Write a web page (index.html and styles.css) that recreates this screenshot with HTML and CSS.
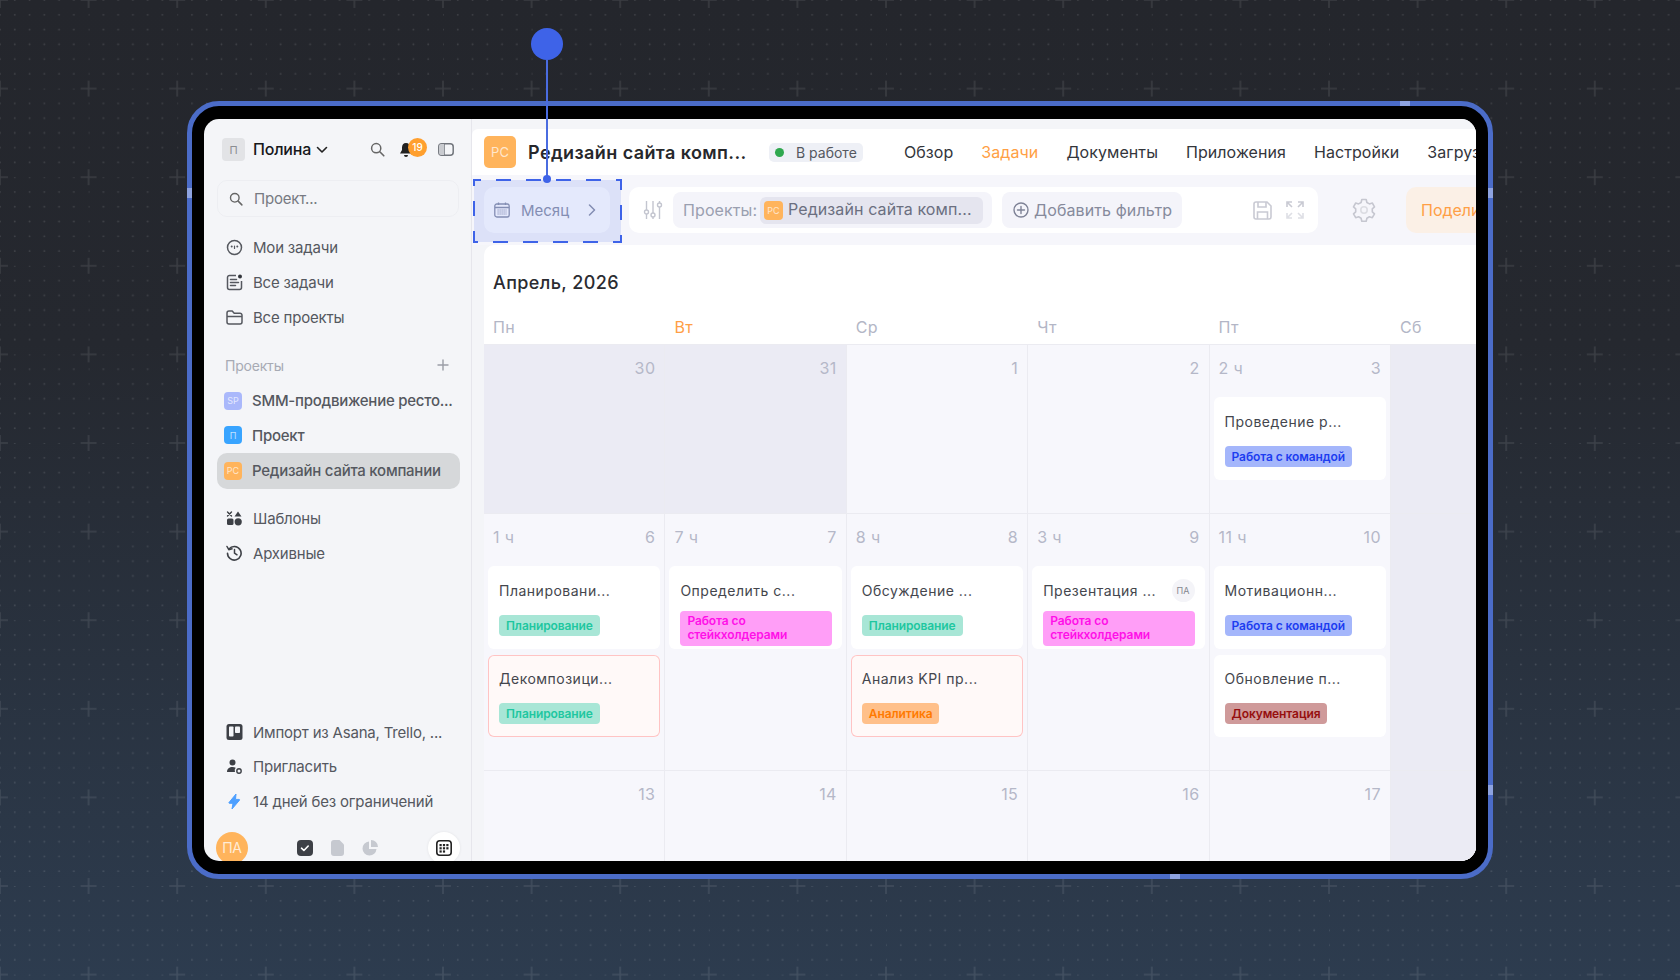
FILE: index.html
```html
<!DOCTYPE html>
<html lang="ru">
<head>
    <meta charset="UTF-8">
    <title>Календарь задач</title>
    <link rel="stylesheet" href="styles.css">
</head>
<body>

<!-- Backdrop: dots and pluses -->
<svg class="backdrop" width="1680" height="980">
    <defs>
        <pattern id="grid" width="88.6" height="88.6" patternUnits="userSpaceOnUse">
            <g fill="#fff" fill-opacity="0.13">
                <circle cx="14.77" cy="14.77" r="0.9"/><circle cx="29.53" cy="14.77" r="0.9"/><circle cx="44.3" cy="14.77" r="0.9"/><circle cx="59.07" cy="14.77" r="0.9"/><circle cx="73.83" cy="14.77" r="0.9"/>
                <circle cx="14.77" cy="29.53" r="0.9"/><circle cx="29.53" cy="29.53" r="0.9"/><circle cx="44.3" cy="29.53" r="0.9"/><circle cx="59.07" cy="29.53" r="0.9"/><circle cx="73.83" cy="29.53" r="0.9"/>
                <circle cx="14.77" cy="44.3" r="0.9"/><circle cx="29.53" cy="44.3" r="0.9"/><circle cx="44.3" cy="44.3" r="0.9"/><circle cx="59.07" cy="44.3" r="0.9"/><circle cx="73.83" cy="44.3" r="0.9"/>
                <circle cx="14.77" cy="59.07" r="0.9"/><circle cx="29.53" cy="59.07" r="0.9"/><circle cx="44.3" cy="59.07" r="0.9"/><circle cx="59.07" cy="59.07" r="0.9"/><circle cx="73.83" cy="59.07" r="0.9"/>
                <circle cx="14.77" cy="73.83" r="0.9"/><circle cx="29.53" cy="73.83" r="0.9"/><circle cx="44.3" cy="73.83" r="0.9"/><circle cx="59.07" cy="73.83" r="0.9"/><circle cx="73.83" cy="73.83" r="0.9"/>
                <circle cx="14.77" cy="0" r="0.9"/><circle cx="29.53" cy="0" r="0.9"/><circle cx="44.3" cy="0" r="0.9"/><circle cx="59.07" cy="0" r="0.9"/><circle cx="73.83" cy="0" r="0.9"/>
                <circle cx="0" cy="14.77" r="0.9"/><circle cx="0" cy="29.53" r="0.9"/><circle cx="0" cy="44.3" r="0.9"/><circle cx="0" cy="59.07" r="0.9"/><circle cx="0" cy="73.83" r="0.9"/>
            </g>
            <path d="M0 0h8M80.6 0h8M0 88.6h8M80.6 88.6h8M0 0v8M0 80.6v8M88.6 0v8M88.6 80.6v8" stroke="#fff" stroke-opacity="0.1" stroke-width="1.6" fill="none"/>
        </pattern>
    </defs>
    <rect width="1680" height="980" fill="url(#grid)"/>
</svg>

<div class="frame">
    <span class="marker marker-left"></span>
    <span class="marker marker-top"></span>
    <span class="marker marker-right"></span>
    <span class="marker marker-right-low"></span>
    <span class="marker marker-bottom"></span>

    <div class="screen">

        <!-- Sidebar -->
        <aside class="sidebar">
            <div class="account">
                <span class="account-pic">П</span>
                <span class="account-name">Полина</span>
                <svg class="account-caret" width="12" height="8" viewBox="0 0 12 8"><path d="M1.5 1.5 6 6l4.5-4.5" fill="none" stroke="#222" stroke-width="1.6" stroke-linecap="round" stroke-linejoin="round"/></svg>
                <svg class="account-search" width="15" height="15" viewBox="0 0 15 15"><circle cx="6.2" cy="6.2" r="4.6" fill="none" stroke="#666" stroke-width="1.5"/><path d="m9.8 9.8 4 4" stroke="#666" stroke-width="1.6" stroke-linecap="round"/></svg>
                <span class="bell">
                    <svg width="14" height="16" viewBox="0 0 14 16"><path d="M7 1C4.4 1 3 3 3 5.500V8L1 11.500h12L11 8V5.500C11 3 9.600 1 7 1Z" fill="#222"/><path d="M5 13h4a2 2 0 0 1-4 0Z" fill="#222"/></svg>
                    <span class="bell-count">19</span>
                </span>
                <svg class="account-panel" width="16" height="13" viewBox="0 0 16 13"><rect x="0.800" y="0.800" width="14.400" height="11.400" rx="3" fill="none" stroke="#71757c" stroke-width="1.500"/><path d="M6 1v11" stroke="#71757c" stroke-width="1.500"/><path d="M3 1h3v11H3a2 2 0 0 1-2-2V3a2 2 0 0 1 2-2Z" fill="#c9cbd0"/></svg>
            </div>

            <div class="search">
                <svg width="14" height="14" viewBox="0 0 15 15"><circle cx="6.200" cy="6.200" r="4.600" fill="none" stroke="#666" stroke-width="1.500"/><path d="m9.800 9.800 4 4" stroke="#666" stroke-width="1.600" stroke-linecap="round"/></svg>
                <span>Проект...</span>
            </div>

            <nav class="menu">
                <a class="menu-item">
                    <svg width="17" height="17" viewBox="0 0 17 17"><circle cx="8.500" cy="8.500" r="7" fill="none" stroke="#55585f" stroke-width="1.500"/><circle cx="5.700" cy="7.500" r="1" fill="#55585f"/><circle cx="11.300" cy="7.500" r="1" fill="#55585f"/><path d="M8.500 7v2.500" stroke="#55585f" stroke-width="1.200" stroke-linecap="round"/></svg>
                    Мои задачи
                </a>
                <a class="menu-item">
                    <svg width="17" height="17" viewBox="0 0 17 17"><path d="M10 1.500H3.500a2 2 0 0 0-2 2v10a2 2 0 0 0 2 2h10a2 2 0 0 0 2-2V7" fill="none" stroke="#55585f" stroke-width="1.500"/><path d="M4.500 5.500h6M4.500 8.500h8M4.500 11.500h5" stroke="#55585f" stroke-width="1.500" stroke-linecap="round"/><circle cx="14" cy="2.500" r="2" fill="#33363c"/></svg>
                    Все задачи
                </a>
                <a class="menu-item">
                    <svg width="17" height="15" viewBox="0 0 17 15"><path d="M1 4V3a2 2 0 0 1 2-2h3.200l2 2.200H14a2 2 0 0 1 2 2V12a2 2 0 0 1-2 2H3a2 2 0 0 1-2-2Z" fill="none" stroke="#55585f" stroke-width="1.500" stroke-linejoin="round"/><path d="M1 6.500h15" stroke="#55585f" stroke-width="1.500"/></svg>
                    Все проекты
                </a>
            </nav>

            <div class="section-title">
                <span>Проекты</span>
                <svg width="12" height="12" viewBox="0 0 12 12"><path d="M6 1v10M1 6h10" stroke="#9a9da6" stroke-width="1.400" stroke-linecap="round"/></svg>
            </div>

            <div class="projects">
                <a class="project"><span class="project-pic pic-violet">SP</span><span class="project-name">SMM-продвижение ресто...</span></a>
                <a class="project"><span class="project-pic pic-blue">П</span><span class="project-name">Проект</span></a>
                <a class="project project-active"><span class="project-pic pic-orange">РС</span><span class="project-name">Редизайн сайта компании</span></a>
            </div>

            <nav class="menu menu-extra">
                <a class="menu-item">
                    <svg width="17" height="15" viewBox="0 0 17 15"><path d="m1.500 1 4 4M5.500 1l-4 4" stroke="#3d4046" stroke-width="1.400" stroke-linecap="round"/><path d="M12 0.500l3.500 5h-7Z" fill="#3d4046"/><rect x="1" y="7.500" width="6.500" height="6.500" rx="1.500" fill="#3d4046"/><circle cx="12.200" cy="10.800" r="3.600" fill="#3d4046"/></svg>
                    Шаблоны
                </a>
                <a class="menu-item">
                    <svg width="17" height="16" viewBox="0 0 17 16"><path d="M3 4a6.800 6.800 0 1 1-1.500 4.200" fill="none" stroke="#3d4046" stroke-width="1.600" stroke-linecap="round"/><path d="M1 1.500 2.800 4.700 6 3.800" fill="none" stroke="#3d4046" stroke-width="1.500" stroke-linecap="round" stroke-linejoin="round"/><path d="M8.500 4.500V8l2.500 1.800" fill="none" stroke="#3d4046" stroke-width="1.500" stroke-linecap="round"/></svg>
                    Архивные
                </a>
            </nav>

            <nav class="menu menu-bottom">
                <a class="menu-item">
                    <svg width="16" height="16" viewBox="0 0 16 16"><rect width="16" height="16" rx="2.500" fill="#3d4046"/><rect x="2.500" y="2.500" width="4.500" height="10" rx="0.800" fill="#f4f5f8"/><rect x="8.500" y="2.500" width="5" height="6.500" rx="0.800" fill="#f4f5f8"/></svg>
                    Импорт из Asana, Trello, ...
                </a>
                <a class="menu-item">
                    <svg width="17" height="15" viewBox="0 0 17 15"><circle cx="6.500" cy="3.500" r="3" fill="#3d4046"/><path d="M1 13c0-3.200 2.400-5 5.500-5 1.200 0 2.300.3 3.200.8A4 4 0 0 0 9 13Z" fill="#3d4046"/><circle cx="13" cy="12" r="2.200" fill="none" stroke="#3d4046" stroke-width="1.400"/></svg>
                    Пригласить
                </a>
                <a class="menu-item">
                    <svg width="17" height="17" viewBox="0 0 17 17"><path d="M10 1 3 9.500c-.3.400 0 .8.400.8H7L6 16l7.500-8.800c.3-.4 0-.8-.4-.8H9.500Z" fill="#4d9fff" stroke="#4d9fff" stroke-linejoin="round"/></svg>
                    14 дней без ограничений
                </a>
            </nav>

            <div class="dock">
                <span class="dock-avatar">ПА</span>
                <svg class="dock-first" width="16" height="16" viewBox="0 0 16 16"><rect width="16" height="16" rx="4" fill="#3d4046"/><path d="m4.500 8.200 2.400 2.300 4.300-4.500" fill="none" stroke="#fff" stroke-width="1.600" stroke-linecap="round" stroke-linejoin="round"/></svg>
                <svg width="13" height="16" viewBox="0 0 13 16"><path d="M3 0h5.500L13 4.500V13a3 3 0 0 1-3 3H3a3 3 0 0 1-3-3V3a3 3 0 0 1 3-3Z" fill="#c6c9d0"/></svg>
                <svg width="16" height="16" viewBox="0 0 16 16"><path d="M7 1.500V9h7.500A7 7 0 1 1 7 1.500Z" fill="#c6c9d0"/><path d="M9 0a7 7 0 0 1 7 7H9Z" fill="#c6c9d0"/></svg>
                <span class="dock-calendar">
                    <svg width="16" height="16" viewBox="0 0 16 16"><rect x="0.800" y="0.800" width="14.400" height="14.400" rx="3" fill="none" stroke="#222" stroke-width="1.600"/><g fill="#222"><rect x="3.500" y="4" width="2.200" height="2.200"/><rect x="6.900" y="4" width="2.200" height="2.200"/><rect x="10.300" y="4" width="2.200" height="2.200"/><rect x="3.500" y="7.200" width="2.200" height="2.200"/><rect x="6.900" y="7.200" width="2.200" height="2.200"/><rect x="10.300" y="7.200" width="2.200" height="2.200"/><rect x="3.500" y="10.400" width="2.200" height="2.200"/><rect x="6.900" y="10.400" width="2.200" height="2.200"/></g></svg>
                </span>
            </div>
        </aside>

        <!-- Main area -->
        <main class="main">
            <header class="topbar">
                <span class="topbar-logo">РС</span>
                <h1 class="topbar-title">Редизайн сайта комп...</h1>
                <span class="status"><i class="status-dot"></i>В работе</span>
                <nav class="tabs">
                    <a>Обзор</a>
                    <a class="tab-active">Задачи</a>
                    <a>Документы</a>
                    <a>Приложения</a>
                    <a>Настройки</a>
                    <a>Загрузки</a>
                </nav>
            </header>

            <div class="toolbar">
                <div class="period">
                    <svg width="16" height="16" viewBox="0 0 16 16"><rect x="0.800" y="2" width="14.400" height="13" rx="2" fill="none" stroke="#8f95ab" stroke-width="1.300"/><path d="M1 5.500h14M4.500 0.500v2.500M11.500 0.500v2.500" stroke="#8f95ab" stroke-width="1.300"/><path d="M3.500 8h9M3.500 10h9M3.500 12h9" stroke="#8f95ab" stroke-width="1.200" stroke-dasharray="1.200 0.800"/></svg>
                    <span class="period-label">Месяц</span>
                    <svg class="period-arrow" width="8" height="12" viewBox="0 0 8 12"><path d="m1.500 1 5 5-5 5" fill="none" stroke="#8f95ab" stroke-width="1.500" stroke-linecap="round" stroke-linejoin="round"/></svg>
                </div>

                <div class="filters">
                    <svg class="filters-icon" width="20" height="20" viewBox="0 0 20 20"><g fill="none" stroke="#c3c5cf" stroke-width="1.400"><path d="M3.500 1v9M3.500 14v5M10 1v12M10 17v2M16.500 1v2M16.500 7v12"/><circle cx="3.500" cy="12" r="2"/><circle cx="10" cy="15" r="2"/><circle cx="16.500" cy="5" r="2"/></g></svg>
                    <div class="filter-chip">
                        <span>Проекты:</span>
                        <span class="filter-value"><span class="filter-logo">РС</span><span class="filter-text">Редизайн сайта комп...</span></span>
                    </div>
                    <div class="filter-add">
                        <svg width="16" height="16" viewBox="0 0 16 16"><circle cx="8" cy="8" r="7" fill="none" stroke="#7e8296" stroke-width="1.400"/><path d="M8 4.500v7M4.500 8h7" stroke="#7e8296" stroke-width="1.400" stroke-linecap="round"/></svg>
                        Добавить фильтр
                    </div>
                    <svg class="filters-save" width="19" height="19" viewBox="0 0 19 19"><path d="M3 1h11l4 4v11a2 2 0 0 1-2 2H3a2 2 0 0 1-2-2V3a2 2 0 0 1 2-2Z" fill="none" stroke="#c9cad3" stroke-width="1.600"/><path d="M5 1v5h8V1M4.500 18v-7h10v7" fill="none" stroke="#c9cad3" stroke-width="1.600"/></svg>
                    <svg class="filters-expand" width="18" height="18" viewBox="0 0 18 18"><g fill="none" stroke="#c9cad3" stroke-width="1.600"><path d="M1 6V1h5M1 1l5 5"/><path d="M17 6V1h-5M17 1l-5 5"/></g><g fill="none" stroke="#dedfe5" stroke-width="1.600"><path d="M1 12v5h5M1 17l5-5"/><path d="M17 12v5h-5M17 17l-5-5"/></g></svg>
                </div>

                <svg class="toolbar-gear" width="24" height="24" viewBox="0 0 24 24"><path d="M9.800 1.500h4.400l.7 3 2.500 1.400 2.900-.9 2.200 3.800-2.200 2.100v2.900l2.200 2.100-2.200 3.800-2.900-.9-2.500 1.400-.7 3H9.800l-.7-3-2.500-1.400-2.900.9-2.200-3.800 2.200-2.100v-2.900L1.500 8.800 3.700 5l2.900.9 2.500-1.400Z" fill="none" stroke="#c6c7d0" stroke-width="1.600" stroke-linejoin="round"/><circle cx="12" cy="12" r="3.200" fill="none" stroke="#dcdde3" stroke-width="1.600"/></svg>
                <button class="share">Поделиться</button>
            </div>

            <section class="calendar">
                <h2 class="calendar-title">Апрель, 2026</h2>
                <div class="weekdays">
                    <span>Пн</span>
                    <span class="weekday-today">Вт</span>
                    <span>Ср</span>
                    <span>Чт</span>
                    <span>Пт</span>
                    <span>Сб</span>
                </div>

                <div class="month">
                    <!-- Week 1 -->
                    <div class="day day-off"><div class="day-head"><span></span><span>30</span></div></div>
                    <div class="day day-off"><div class="day-head"><span></span><span>31</span></div></div>
                    <div class="day"><div class="day-head"><span></span><span>1</span></div></div>
                    <div class="day"><div class="day-head"><span></span><span>2</span></div></div>
                    <div class="day">
                        <div class="day-head"><span>2 ч</span><span>3</span></div>
                        <div class="task">
                            <div class="task-title">Проведение р...</div>
                            <span class="tag tag-blue">Работа с командой</span>
                        </div>
                    </div>
                    <div class="day day-off"></div>

                    <!-- Week 2 -->
                    <div class="day">
                        <div class="day-head"><span>1 ч</span><span>6</span></div>
                        <div class="task">
                            <div class="task-title">Планировани...</div>
                            <span class="tag tag-green">Планирование</span>
                        </div>
                        <div class="task task-late">
                            <div class="task-title">Декомпозици...</div>
                            <span class="tag tag-green">Планирование</span>
                        </div>
                    </div>
                    <div class="day">
                        <div class="day-head"><span>7 ч</span><span>7</span></div>
                        <div class="task">
                            <div class="task-title">Определить с...</div>
                            <span class="tag tag-pink">Работа со стейкхолдерами</span>
                        </div>
                    </div>
                    <div class="day">
                        <div class="day-head"><span>8 ч</span><span>8</span></div>
                        <div class="task">
                            <div class="task-title">Обсуждение ...</div>
                            <span class="tag tag-green">Планирование</span>
                        </div>
                        <div class="task task-late">
                            <div class="task-title">Анализ KPI пр...</div>
                            <span class="tag tag-orange">Аналитика</span>
                        </div>
                    </div>
                    <div class="day">
                        <div class="day-head"><span>3 ч</span><span>9</span></div>
                        <div class="task">
                            <div class="task-title">Презентация ...<span class="task-user">ПА</span></div>
                            <span class="tag tag-pink">Работа со стейкхолдерами</span>
                        </div>
                    </div>
                    <div class="day">
                        <div class="day-head"><span>11 ч</span><span>10</span></div>
                        <div class="task">
                            <div class="task-title">Мотивационн...</div>
                            <span class="tag tag-blue">Работа с командой</span>
                        </div>
                        <div class="task">
                            <div class="task-title">Обновление п...</div>
                            <span class="tag tag-red">Документация</span>
                        </div>
                    </div>
                    <div class="day day-off"></div>

                    <!-- Week 3 -->
                    <div class="day"><div class="day-head"><span></span><span>13</span></div></div>
                    <div class="day"><div class="day-head"><span></span><span>14</span></div></div>
                    <div class="day"><div class="day-head"><span></span><span>15</span></div></div>
                    <div class="day"><div class="day-head"><span></span><span>16</span></div></div>
                    <div class="day"><div class="day-head"><span></span><span>17</span></div></div>
                    <div class="day day-off"></div>
                </div>
            </section>
        </main>
    </div>
</div>

<!-- Callout over the month switcher -->
<div class="callout">
    <span class="callout-pin"></span>
    <span class="callout-line"></span>
    <span class="callout-dot"></span>
</div>
<svg class="selection" width="149" height="64"><rect x="1" y="1" width="147" height="62" fill="rgba(62,99,232,0.14)" stroke="#3e63e8" stroke-width="2" stroke-dasharray="15 15" stroke-dashoffset="8"/></svg>

</body>
</html>
```

FILE: styles.css
```css
* {
    box-sizing: border-box;
}

body {
    margin: 0;
    width: 1680px;
    height: 980px;
    overflow: hidden;
    position: relative;
    padding: 101px 0 0 187px;
    font-family: Inter, "Noto Sans", sans-serif;
    background: linear-gradient(180deg, #24262c 0%, #25282f 35%, #2d3c4f 100%);
}

a {
    color: inherit;
    text-decoration: none;
}

h1, h2 {
    margin: 0;
}

svg {
    display: block;
    flex-shrink: 0;
}

.backdrop {
    position: absolute;
    left: 0;
    top: 0;
}

/* Tablet frame */
.frame {
    position: relative;
    width: 1306px;
    height: 778px;
    padding: 13px 12px;
    background: #000;
    border: 5px solid #4b6cc8;
    border-radius: 32px;
}

.marker {
    position: absolute;
    background: #8ea3e0;
}

.marker-left {
    left: -5px;
    top: 82px;
    width: 5px;
    height: 10px;
}

.marker-top {
    left: 1208px;
    top: -5px;
    width: 10px;
    height: 5px;
}

.marker-right {
    right: -5px;
    top: 82px;
    width: 5px;
    height: 10px;
}

.marker-right-low {
    right: -5px;
    top: 679px;
    width: 5px;
    height: 10px;
}

.marker-bottom {
    left: 978px;
    bottom: -5px;
    width: 10px;
    height: 5px;
}

.screen {
    display: flex;
    width: 1272px;
    height: 742px;
    overflow: hidden;
    background: #f4f5f8;
    border-radius: 15px;
}

/* Sidebar */
.sidebar {
    display: flex;
    flex-direction: column;
    flex-shrink: 0;
    width: 268px;
    height: 742px;
    padding: 19px 12px 0 13px;
    border-right: 1px solid #e6e6ec;
    font-size: 15px;
    letter-spacing: -0.2px;
    color: #55585f;
}

.account {
    display: flex;
    align-items: center;
    height: 23px;
    padding-left: 5px;
}

.account-pic {
    display: flex;
    align-items: center;
    justify-content: center;
    width: 23px;
    height: 23px;
    margin-right: 8px;
    border-radius: 4px;
    background: #e2e3e6;
    color: #8b8d92;
    font-size: 11px;
}

.account-name {
    margin-top: -2px;
    font-size: 16px;
    font-weight: 500;
    color: #17181b;
}

.account-caret {
    margin-left: 5px;
}

.account-search {
    margin-left: 42px;
}

.bell {
    position: relative;
    display: block;
    width: 14px;
    height: 16px;
    margin-left: 14px;
}

.bell-count {
    position: absolute;
    left: 9px;
    top: -4px;
    width: 19px;
    height: 19px;
    border-radius: 50%;
    background: #ff9f2e;
    color: #fff;
    font-size: 10px;
    font-weight: 500;
    letter-spacing: 0;
    line-height: 19px;
    text-align: center;
}

.account-panel {
    margin-left: 25px;
}

.search {
    display: flex;
    align-items: center;
    gap: 11px;
    height: 37px;
    margin-top: 19px;
    padding-left: 11px;
    border: 1px solid #edeef2;
    border-radius: 10px;
    color: #777a82;
}

.menu {
    margin-top: 13px;
}

.menu-item {
    display: flex;
    align-items: center;
    gap: 10px;
    height: 35px;
    padding-left: 9px;
    white-space: nowrap;
}

.menu-item svg {
    width: 17px;
}

.section-title {
    display: flex;
    align-items: center;
    justify-content: space-between;
    height: 20px;
    margin-top: 20px;
    padding: 0 10px 0 8px;
    font-size: 14px;
    color: #a7aab4;
}

.projects {
    margin-top: 8.500px;
}

.project {
    display: flex;
    align-items: center;
    gap: 10px;
    height: 34.500px;
    padding-left: 7px;
    border-radius: 10px;
    font-weight: 500;
    letter-spacing: -0.25px;
    white-space: nowrap;
}

.project-active {
    height: 36px;
    margin-right: -1px;
    background: #d6d8da;
}

.project-pic {
    display: flex;
    align-items: center;
    justify-content: center;
    width: 18px;
    height: 18px;
    border-radius: 4px;
    color: rgba(255, 255, 255, 0.7);
    font-size: 9px;
    font-weight: 400;
    letter-spacing: 0;
}

.pic-violet {
    background: #aab8fb;
}

.pic-blue {
    background: #38a4ff;
}

.pic-orange {
    background: #ffb45c;
}

.menu-extra {
    margin-top: 12px;
}

.menu-bottom {
    margin-top: auto;
}

.menu-bottom .menu-item {
    height: 34.500px;
}

.dock {
    display: flex;
    flex-shrink: 0;
    align-items: center;
    gap: 18px;
    height: 32px;
    margin: 13.500px -1px -3px -1px;
}

.dock-avatar {
    width: 32px;
    height: 32px;
    margin-right: 31px;
    border-radius: 50%;
    background: #ffb45c;
    color: rgba(255, 255, 255, 0.75);
    font-size: 14px;
    line-height: 32px;
    text-align: center;
}

.dock-calendar {
    display: flex;
    align-items: center;
    justify-content: center;
    width: 32px;
    height: 32px;
    margin-left: auto;
    border-radius: 50%;
    background: #fff;
    box-shadow: 0 0 3px rgba(0, 0, 0, 0.08);
}

/* Main */
.main {
    flex: 1;
    min-width: 0;
    padding-top: 10px;
    background: #f4f5f8;
}

.topbar {
    display: flex;
    align-items: center;
    height: 46px;
    padding-left: 12px;
    overflow: hidden;
    border-radius: 6px 0 0 0;
    background: #fff;
}

.topbar-logo {
    flex-shrink: 0;
    width: 32px;
    height: 32px;
    border-radius: 5px;
    background: #ffb45c;
    color: rgba(255, 255, 255, 0.7);
    font-size: 13px;
    line-height: 32px;
    text-align: center;
}

.topbar-title {
    flex-shrink: 0;
    width: 241px;
    margin-left: 12px;
    font-size: 18px;
    font-weight: 600;
    letter-spacing: 0.4px;
    color: #26272b;
    white-space: nowrap;
}

.status {
    display: flex;
    flex-shrink: 0;
    align-items: center;
    width: 94px;
    height: 19px;
    padding-left: 6px;
    border-radius: 5px;
    background: #eef0f6;
    font-size: 14px;
    color: #55585f;
    white-space: nowrap;
}

.status-dot {
    width: 9px;
    height: 9px;
    margin-right: 12px;
    border-radius: 50%;
    background: #2fa84f;
}

.tabs {
    display: flex;
    flex-shrink: 0;
    gap: 28px;
    margin-left: 41px;
    font-size: 16px;
    letter-spacing: 0.07px;
    color: #33353b;
    white-space: nowrap;
}

.tab-active {
    color: #ff9f45;
}

.toolbar {
    display: flex;
    align-items: center;
    height: 70px;
    padding: 0 0 0 12px;
    overflow: hidden;
    background: #f6f6fb;
}

.period {
    display: flex;
    flex-shrink: 0;
    align-items: center;
    width: 126px;
    height: 46px;
    padding-left: 10px;
    border-radius: 10px;
    background: #fff;
    font-size: 15px;
    color: #8f95ab;
}

.period-label {
    margin-left: 11px;
}

.period-arrow {
    margin-left: auto;
    margin-right: 14px;
}

.filters {
    display: flex;
    flex-shrink: 0;
    align-items: center;
    width: 689px;
    height: 46px;
    margin-left: 19px;
    padding-left: 14px;
    border-radius: 10px;
    background: #fff;
}

.filters-icon {
    margin-right: 10px;
}

.filter-chip {
    display: flex;
    align-items: center;
    justify-content: space-between;
    width: 319px;
    height: 36px;
    padding: 0 9px 0 10px;
    border-radius: 8px;
    background: #f4f4fa;
    font-size: 16px;
    letter-spacing: 0.1px;
    color: #9a9fb0;
    white-space: nowrap;
}

.filter-value {
    display: flex;
    align-items: center;
    width: 223px;
    height: 27px;
    padding-left: 4px;
    border-radius: 6px;
    background: #e5e5ef;
    color: #6b6f80;
}

.filter-text {
    margin-top: -2px;
}

.filter-logo {
    width: 19px;
    height: 19px;
    margin-right: 5px;
    border-radius: 4px;
    background: #ffb45c;
    color: rgba(255, 255, 255, 0.7);
    font-size: 9px;
    letter-spacing: 0;
    line-height: 19px;
    text-align: center;
}

.filter-add {
    display: flex;
    align-items: center;
    gap: 5px;
    width: 180px;
    height: 36px;
    margin-left: 10px;
    padding-left: 11px;
    border-radius: 8px;
    background: #f4f4fa;
    font-size: 16px;
    letter-spacing: 0.1px;
    color: #868a9c;
    white-space: nowrap;
}

.filters-save {
    margin-left: auto;
}

.filters-expand {
    margin: 0 14px 0 14px;
}

.toolbar-gear {
    margin-left: 34px;
}

.share {
    flex-shrink: 0;
    width: 130px;
    height: 46px;
    margin-left: 30px;
    padding: 0 0 0 15px;
    border: none;
    border-radius: 10px;
    background: #fbf0e6;
    color: #ff9f45;
    font-family: inherit;
    font-size: 16px;
    text-align: left;
    white-space: nowrap;
}

/* Calendar */
.calendar {
    height: 616px;
    margin-left: 12px;
    padding-top: 26px;
    overflow: hidden;
    border-radius: 10px 0 0 0;
    background: #fff;
}

.calendar-title {
    height: 24px;
    padding-left: 9px;
    font-size: 18px;
    font-weight: 500;
    line-height: 24px;
    letter-spacing: 0.4px;
    color: #2b2c31;
}

.weekdays,
.month {
    display: grid;
    grid-template-columns: repeat(5, 181.400px) 1fr;
}

.weekdays {
    height: 50px;
    padding-top: 22px;
    border-bottom: 1px solid #ebebf1;
    font-size: 16px;
    letter-spacing: 0.3px;
    line-height: 20px;
    color: #b3b6c6;
}

.weekdays span {
    padding-left: 9px;
}

.weekday-today {
    color: #ff9f45;
}

.month {
    grid-template-rows: 169px 257px 91px;
}

.day {
    padding: 12px 4px 0 4px;
    border-right: 1px solid #ebebf1;
    border-bottom: 1px solid #ebebf1;
    background: #f7f7fc;
}

.day-off {
    background: #ebebf4;
}

.day-head {
    display: flex;
    justify-content: space-between;
    height: 22px;
    margin-bottom: 18px;
    padding: 0 5px 0 5px;
    font-size: 16px;
    letter-spacing: 0.4px;
    line-height: 22px;
    color: #b5b8c8;
}

.task {
    height: 83px;
    padding: 14px 10px 0 11px;
    border-radius: 6px;
    background: #fff;
}

.task + .task {
    height: 82px;
    margin-top: 6px;
    padding-top: 13px;
}

.task-late {
    background: #fff9f8;
    box-shadow: inset 0 0 0 1px #ffc4c4;
}

.task-title {
    display: flex;
    align-items: center;
    justify-content: space-between;
    height: 20px;
    margin-bottom: 14px;
    font-size: 14px;
    letter-spacing: 0.5px;
    color: #44464d;
    white-space: nowrap;
}

.task-user {
    width: 23px;
    height: 23px;
    border-radius: 50%;
    background: #f4f4f8;
    color: #85878f;
    font-size: 9px;
    line-height: 23px;
    letter-spacing: 0;
    text-align: center;
}

.tag {
    display: inline-block;
    height: 21px;
    padding: 0 7px;
    border-radius: 4px;
    font-size: 12px;
    font-weight: 600;
    letter-spacing: -0.1px;
    line-height: 21px;
    white-space: nowrap;
}

.tag-green {
    background: #a8e6d6;
    color: #1fc7a0;
}

.tag-blue {
    background: #a4b6fb;
    color: #1d3df0;
}

.tag-orange {
    background: #ffc08a;
    color: #ff7a00;
}

.tag-red {
    background: #cf9a9a;
    color: #960f0f;
}

.tag-pink {
    display: block;
    height: 35px;
    margin-top: -3px;
    padding: 3px 7px 0;
    background: #ff9ef7;
    color: #ff10e8;
    line-height: 14px;
    white-space: normal;
}

/* Callout */
.callout-pin {
    position: absolute;
    left: 531px;
    top: 28px;
    width: 32px;
    height: 32px;
    border-radius: 50%;
    background: #3e63e8;
}

.callout-line {
    position: absolute;
    left: 546px;
    top: 60px;
    width: 2px;
    height: 119px;
    background: #4a6ce0;
}

.callout-dot {
    position: absolute;
    left: 543px;
    top: 175px;
    z-index: 2;
    width: 8px;
    height: 8px;
    border-radius: 50%;
    background: #3e63e8;
}

.selection {
    position: absolute;
    left: 473px;
    top: 179px;
}
```
